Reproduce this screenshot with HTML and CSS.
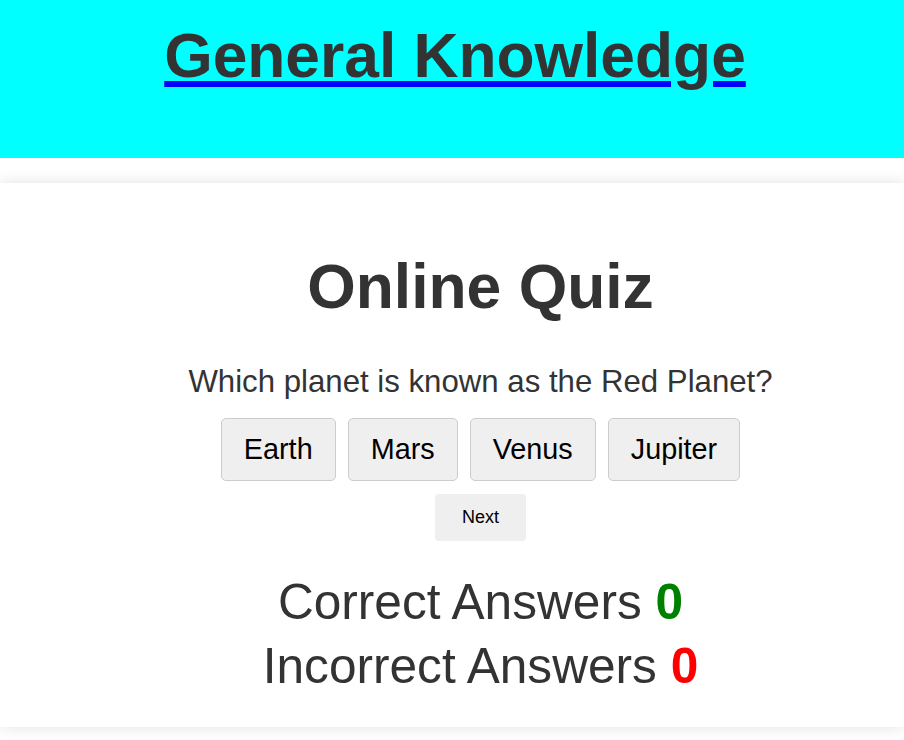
FILE: index.html
```html
<!DOCTYPE html>
<html lang="en">
<head>
<meta charset="utf-8">
<title>General Knowledge Quiz</title>
<link rel="stylesheet" href="styles.css">
</head>
<body>
<header class="site-header">
  <h1 class="site-title"><a class="site-link" href="#"><span class="site-name">General Knowledge</span></a></h1>
</header>
<main class="card">
  <h2 class="quiz-title">Online Quiz</h2>
  <p class="question">Which planet is known as the Red Planet?</p>
  <div class="options">
    <button class="option">Earth</button>
    <button class="option">Mars</button>
    <button class="option">Venus</button>
    <button class="option">Jupiter</button>
  </div>
  <button class="next">Next</button>
  <div class="scores">
    <div class="score">Correct Answers <span class="count correct">0</span></div>
    <div class="score">Incorrect Answers <span class="count incorrect">0</span></div>
  </div>
</main>
</body>
</html>
```

FILE: styles.css
```css
html {
  overflow: hidden;
}

body {
  margin: 0;
  padding: 0 0 20px;
  background: #ffffff;
  font-family: "Liberation Sans", Arial, sans-serif;
  color: #333333;
}

.site-header {
  background: #00ffff;
  height: 158px;
  box-sizing: border-box;
  padding: 20px 0 0 6px;
  text-align: center;
}

.site-title {
  margin: 0;
  font-size: 62.3px;
  line-height: 71px;
  font-weight: bold;
}

.site-link {
  color: #0000ff;
  text-decoration: underline;
  text-decoration-thickness: 6px;
  text-underline-offset: 4px;
}

.site-name {
  color: #333333;
}

.card {
  display: block;
  margin-top: 25px;
  background: #ffffff;
  box-shadow: 0 0 15px rgba(0, 0, 0, 0.12);
  padding: 68px 0 29px 57px;
  text-align: center;
}

.quiz-title {
  margin: 0;
  font-size: 62.4px;
  font-weight: bold;
  line-height: 71px;
}

.question {
  margin: 42px 0 0;
  font-size: 31.2px;
  line-height: 36px;
}

.options {
  margin-top: 18px;
  display: flex;
  justify-content: center;
  gap: 12px;
}

.option {
  font-family: "Liberation Sans", Arial, sans-serif;
  font-size: 28.8px;
  color: #000000;
  background: #efefef;
  border: 1px solid #cccccc;
  border-radius: 5px;
  padding: 14px 22px;
  margin: 0;
  cursor: pointer;
}

.next {
  display: block;
  margin: 13px auto 0;
  font-family: "Liberation Sans", Arial, sans-serif;
  font-size: 18px;
  color: #000000;
  background: #efefef;
  border: none;
  border-radius: 4px;
  padding: 13px 27px;
  cursor: pointer;
}

.scores {
  margin-top: 29px;
}

.score {
  font-size: 49.6px;
  line-height: 64px;
}

.count {
  font-weight: bold;
}

.correct {
  color: #008000;
}

.incorrect {
  color: #ff0000;
}
```
